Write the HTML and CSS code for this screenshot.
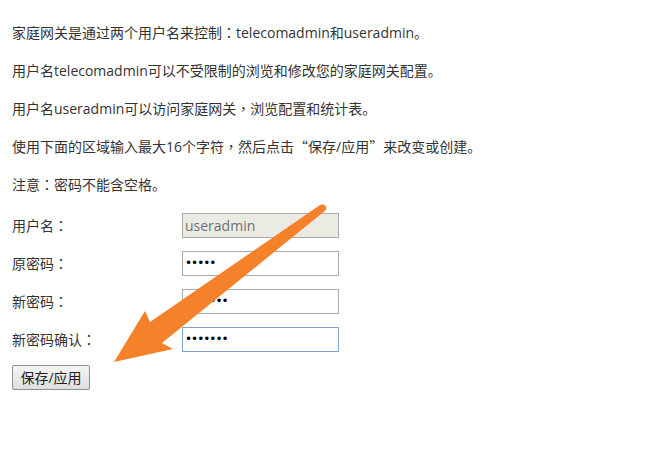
FILE: index.html
```html
<!DOCTYPE html>
<html lang="zh-CN">
<head>
    <meta charset="UTF-8">
    <link rel="stylesheet" href="styles.css">
    <title>用户管理</title>
</head>
<body>
    <div class="page">
        <p>家庭网关是通过两个用户名来控制<span class="pc" lang="zh-TW">：</span>telecomadmin和useradmin。</p>
        <p>用户名telecomadmin可以不受限制的浏览和修改您的家庭网关配置。</p>
        <p>用户名useradmin可以访问家庭网关<span class="pc" lang="zh-TW">，</span>浏览配置和统计表。</p>
        <p>使用下面的区域输入最大16个字符<span class="pc" lang="zh-TW">，</span>然后点击<span class="q">“</span>保存/应用<span class="q">”</span>来改变或创建。</p>
        <p>注意<span class="pc" lang="zh-TW">：</span>密码不能含空格。</p>

        <form class="pw-form">
            <div class="row">
                <label for="user">用户名<span class="pc" lang="zh-TW">：</span></label>
                <input id="user" type="text" value="useradmin" disabled>
            </div>
            <div class="row">
                <label for="oldpw">原密码<span class="pc" lang="zh-TW">：</span></label>
                <input id="oldpw" type="password" value="12345">
            </div>
            <div class="row">
                <label for="newpw">新密码<span class="pc" lang="zh-TW">：</span></label>
                <input id="newpw" type="password" value="1234567">
            </div>
            <div class="row">
                <label for="newpw2">新密码确认<span class="pc" lang="zh-TW">：</span></label>
                <input id="newpw2" class="focused" type="password" value="1234567">
            </div>
            <div class="row">
                <button type="button">保存/应用</button>
            </div>
        </form>
    </div>

    <!-- hint arrow drawn over the form -->
    <svg class="arrow" width="666" height="466" viewBox="0 0 666 466">
        <path d="M114,362 L145,311 L150,322 L320,205 Q327,203 326,210 L162,343 L173,349 Z" fill="#f5812a"/>
    </svg>
</body>
</html>
```

FILE: styles.css
```css
body {
    margin: 0;
    background: #fff;
    color: #333;
    font-family: "Open Sans", "Noto Sans CJK SC", sans-serif;
    font-size: 14px;
}

.page {
    padding: 14px 12px;
}

p {
    margin: 0;
    line-height: 38px;
}

/* centred full-width punctuation, like the original UI font */
.pc {
    font-family: "Noto Sans CJK TC", sans-serif;
    line-height: 1;
}

.q {
    font-family: "Noto Sans CJK SC", sans-serif;
    line-height: 1;
}

.pw-form {
    margin-top: 2px;
}

.row {
    display: flex;
    align-items: center;
    height: 38px;
}

.row label {
    width: 170px;
}

.row input {
    box-sizing: border-box;
    width: 157px;
    height: 25px;
    margin: 0;
    padding: 0 2px;
    border: 1px solid #a9a9a9;
    background: #fff;
    font-family: "Open Sans", "Noto Sans CJK SC", sans-serif;
    font-size: 14px;
    color: #000;
    outline: none;
}

.row input[type="password"] {
    font-family: "DejaVu Sans", sans-serif;
    font-size: 12px;
    letter-spacing: -1px;
}

.row input:disabled {
    background: #ebebe4;
    color: #707070;
}

.row input.focused {
    border-color: #7fa3d0;
}

button {
    box-sizing: border-box;
    width: 78px;
    height: 25px;
    padding: 0;
    border: 1px solid #8f8f8f;
    border-radius: 2px;
    background: linear-gradient(#f4f4f4, #dedede);
    font-family: "Open Sans", "Noto Sans CJK SC", sans-serif;
    font-size: 14px;
    color: #222;
}

.arrow {
    position: absolute;
    left: 0;
    top: 0;
    pointer-events: none;
}
```
